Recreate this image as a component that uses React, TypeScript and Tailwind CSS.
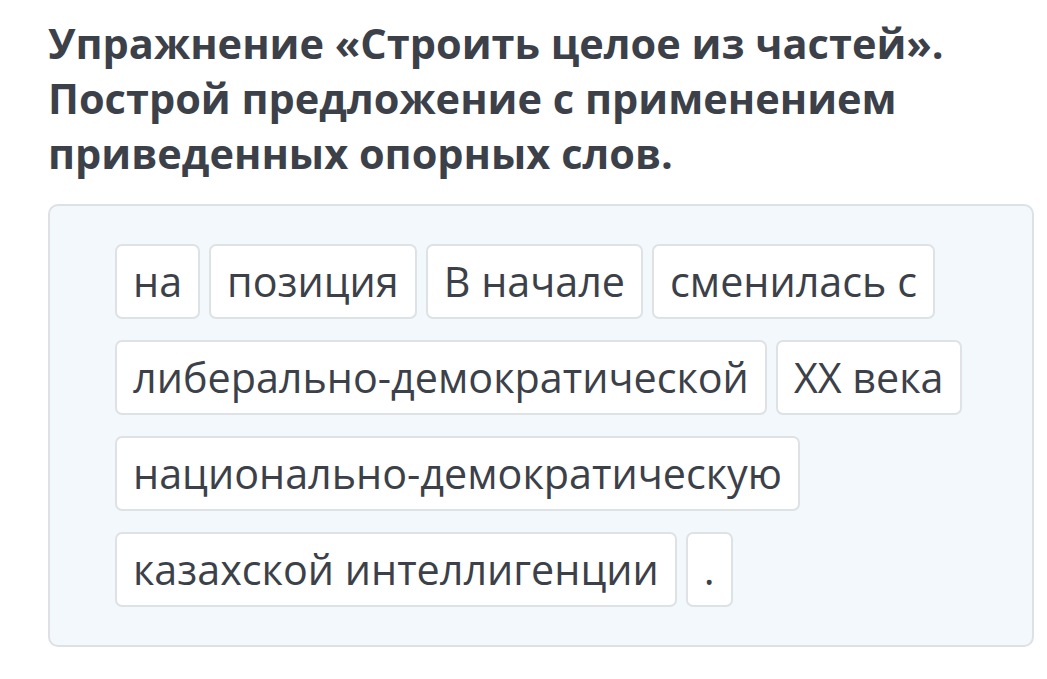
import React from 'react'

const words = [
  'на',
  'позиция',
  'В начале',
  'сменилась с',
  'либерально-демократической',
  'XX века',
  'национально-демократическую',
  'казахской интеллигенции',
  '.',
]

const App = () => {
  return (
    <div className="min-h-screen bg-white pl-[48px] pr-[13px] pt-[16px]" style={{ fontFamily: '"Open Sans", "Noto Sans", sans-serif' }}>
      <h1 className="text-[41.5px] font-bold leading-[55px] text-[#3c4149]">
        Упражнение «Строить целое из частей».
        <br />
        Построй предложение с применением
        <br />
        приведенных опорных слов.
      </h1>

      <div className="mt-[23px] rounded-[10px] border-2 border-[#dde0e4] bg-[#f3f8fc] px-[65px] pt-[38px] pb-[38px]">
        <div className="flex flex-wrap gap-x-[9px] gap-y-[21px]">
          {words.map((w, i) => (
            <div
              key={i}
              className="flex h-[75px] items-center rounded-[7px] border-2 border-[#dfe2e5] bg-white px-[16px] text-[41.3px] leading-none text-[#3c4149]"
            >
              {w}
            </div>
          ))}
        </div>
      </div>
    </div>
  )
}

export default App
